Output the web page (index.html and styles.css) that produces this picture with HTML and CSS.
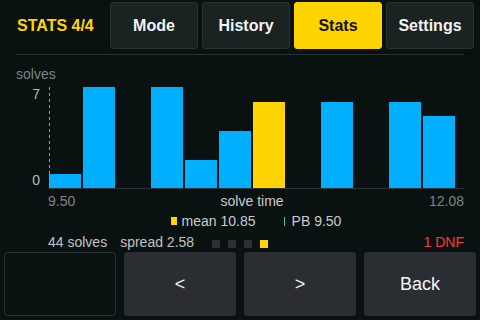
FILE: index.html
```html
<!DOCTYPE html>
<html>
<head>
<meta charset="utf-8">
<link rel="stylesheet" href="styles.css">
</head>
<body>
<div class="screen">
  <header class="top">
    <div class="title">STATS 4/4</div>
    <nav class="tabs">
      <div class="tab">Mode</div>
      <div class="tab">History</div>
      <div class="tab active">Stats</div>
      <div class="tab">Settings</div>
    </nav>
  </header>
  <div class="sep"></div>
  <div class="ylabel">solves</div>
  <div class="chart">
    <div class="yaxis"><span>7</span><span>0</span></div>
    <div class="plot">
      <div class="pb-line"></div>
      <div class="bar" style="height:14px"></div>
      <div class="bar" style="height:101px"></div>
      <div class="bar empty"></div>
      <div class="bar" style="height:101px"></div>
      <div class="bar" style="height:28px"></div>
      <div class="bar" style="height:57px"></div>
      <div class="bar mean" style="height:86px"></div>
      <div class="bar empty"></div>
      <div class="bar" style="height:86px"></div>
      <div class="bar empty"></div>
      <div class="bar" style="height:86px"></div>
      <div class="bar" style="height:72px"></div>
    </div>
  </div>
  <div class="xaxis">
    <span class="dim">9.50</span>
    <span class="xtitle">solve time</span>
    <span class="dim">12.08</span>
  </div>
  <div class="legend">
    <span class="sw-mean"></span><span>mean 10.85</span>
    <span class="sw-pb"></span><span>PB 9.50</span>
  </div>
  <div class="summary">
    <span>44 solves</span>
    <span class="spread">spread 2.58</span>
    <div class="pager"><i></i><i></i><i></i><i class="on"></i></div>
    <span class="dnf">1 DNF</span>
  </div>
  <footer class="buttons">
    <div class="btn blank"></div>
    <div class="btn">&lt;</div>
    <div class="btn">&gt;</div>
    <div class="btn">Back</div>
  </footer>
</div>
</body>
</html>
```
FILE: styles.css
```css
* { box-sizing: border-box; }
html, body { margin: 0; padding: 0; }
body {
  width: 480px;
  height: 320px;
  background: #0a1111;
  font-family: "Liberation Sans", Arial, sans-serif;
  color: #c8cccc;
  overflow: hidden;
}
.screen { width: 480px; height: 320px; }

.top {
  display: flex;
  align-items: center;
  padding: 2px 6px 0 17px;
  height: 49px;
}
.title {
  width: 93px;
  color: #ffd400;
  font-weight: bold;
  font-size: 16px;
}
.tabs { display: flex; gap: 4px; }
.tab {
  width: 88px;
  height: 47px;
  display: flex;
  align-items: center;
  justify-content: center;
  background: #1b2222;
  border: 1px solid #283030;
  border-radius: 3px;
  color: #f2f4f4;
  font-weight: bold;
  font-size: 16px;
}
.tab.active {
  background: #ffd400;
  border-color: #ffd400;
  color: #111;
}
.sep {
  height: 1px;
  margin: 5px 16px 0 16px;
  background: #283030;
}

.ylabel {
  margin: 12px 0 0 16px;
  height: 14px;
  line-height: 14px;
  font-size: 14px;
  color: #7e8484;
}
.chart {
  display: flex;
  margin-top: 6px;
  height: 102px;
}
.yaxis {
  width: 48px;
  padding: 0 8px 2px 0;
  display: flex;
  flex-direction: column;
  justify-content: space-between;
  align-items: flex-end;
  font-size: 14px;
  color: #b8bcbc;
  line-height: 14px;
}
.plot {
  position: relative;
  width: 416px;
  height: 102px;
  border-bottom: 1px solid #2c3238;
  display: flex;
  align-items: flex-end;
  gap: 2px;
  padding-left: 1px;
}
.bar {
  width: 32px;
  flex: none;
  background: #00b0ff;
}
.bar.empty { height: 0; }
.bar.mean { background: #ffd400; }
.pb-line {
  position: absolute;
  left: 1px;
  top: 0;
  bottom: 0;
  width: 1px;
  background: repeating-linear-gradient(to bottom, #2ed47a 0 3px, transparent 3px 6px);
  z-index: 1;
}

.xaxis {
  display: flex;
  justify-content: space-between;
  margin: 4px 16px 0 48px;
  height: 16px;
  line-height: 16px;
  font-size: 14px;
}
.dim { color: #7e8484; }
.xtitle { color: #c8cccc; }

.legend {
  display: flex;
  align-items: center;
  justify-content: center;
  margin: 4px 16px 0 48px;
  height: 16px;
  font-size: 14px;
  color: #c8cccc;
}
.sw-mean {
  width: 6px;
  height: 8px;
  background: #ffd400;
  margin-right: 5px;
}
.sw-pb {
  width: 1px;
  height: 9px;
  background: #2ed47a;
  margin: 0 7px 0 28px;
}

.summary {
  display: flex;
  align-items: center;
  margin: 6px 16px 0 48px;
  height: 14px;
  font-size: 14px;
  color: #c0c4c4;
}
.spread { margin-left: 13px; }
.pager {
  display: flex;
  gap: 8px;
  margin-left: 18px;
  margin-top: 3px;
}
.pager i {
  width: 8px;
  height: 8px;
  background: #2c3035;
}
.pager i.on { background: #ffd400; }
.dnf {
  margin-left: auto;
  color: #ff3a2e;
}

.buttons {
  display: flex;
  gap: 8px;
  margin: 3px 4px 0 4px;
}
.btn {
  width: 112px;
  height: 64px;
  display: flex;
  align-items: center;
  justify-content: center;
  background: #2a2e33;
  border-radius: 4px;
  color: #f4f6f6;
  font-size: 18px;
}
.btn.blank {
  background: transparent;
  border: 1px solid #2c3232;
}
```
